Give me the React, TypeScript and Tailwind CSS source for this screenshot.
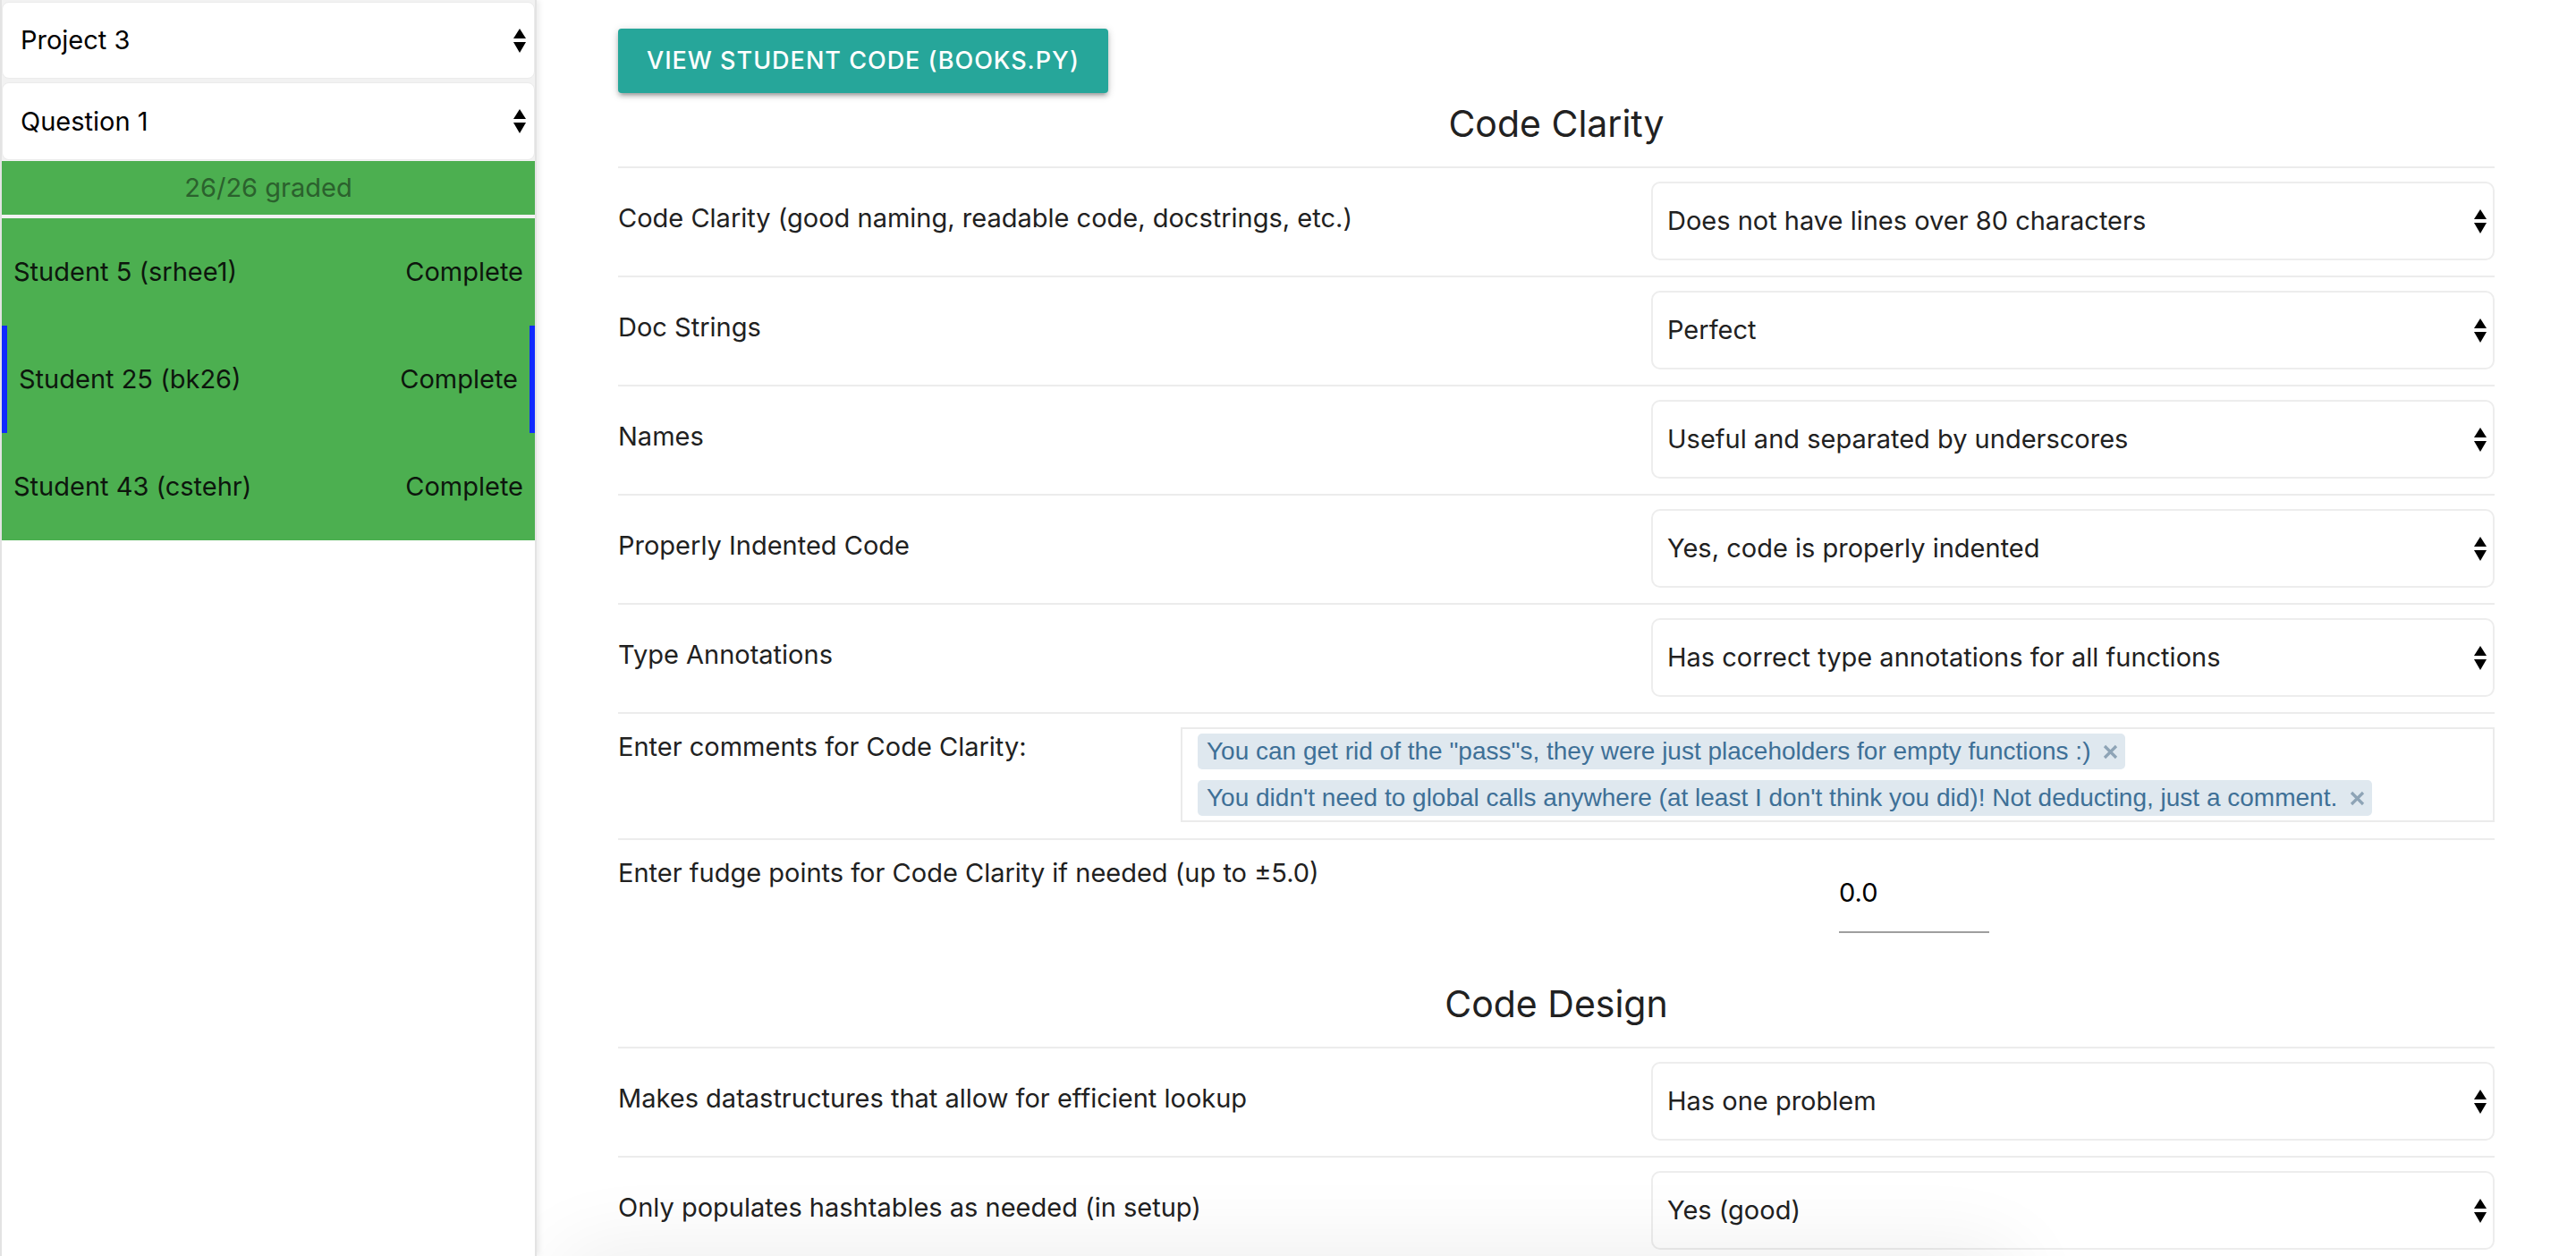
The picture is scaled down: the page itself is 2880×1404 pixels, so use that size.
import React from "react";

const Arrows = () => (
  <svg width="14" height="27" viewBox="0 0 14 27" className="shrink-0">
    <path d="M7 0 L14 11 L0 11 Z" fill="#000" />
    <path d="M0 15 L14 15 L7 27 Z" fill="#000" />
  </svg>
);

const SideSelect = ({ label, h }: { label: string; h: string }) => (
  <div className={`${h} flex items-center justify-between rounded-[8px] border border-[#ebebeb] bg-white pl-[20px] pr-[9px]`}>
    <span className="text-[29px] text-black">{label}</span>
    <Arrows />
  </div>
);

const students = [
  { name: "Student 5 (srhee1)", sel: false },
  { name: "Student 25 (bk26)", sel: true },
  { name: "Student 43 (cstehr)", sel: false },
];

const Select = ({ value }: { value: string }) => (
  <div className="flex h-[88px] items-center justify-between rounded-[10px] border-2 border-[#ededed] bg-white pl-[16px] pr-[7px]">
    <span className="text-[29px] text-[#212121]">{value}</span>
    <Arrows />
  </div>
);

const Row = ({ label, value }: { label: string; value: string }) => (
  <div className="flex border-t-2 border-[#ececec]">
    <div className="w-[1155px] shrink-0 pt-[33px] text-[29px] leading-[45px] text-[#212121]">{label}</div>
    <div className="flex-1 pt-[15px] pb-[17px]">
      <Select value={value} />
    </div>
  </div>
);

const Chip = ({ text }: { text: string }) => (
  <div className="flex h-[40px] items-center gap-[14px] self-start rounded-[5px] bg-[#dfe8ef] pl-[10px] pr-[8px] font-['Liberation_Sans',Arial,sans-serif] text-[28px] text-[#3e7097]">
    <span>{text}</span>
    <svg width="17" height="17" viewBox="0 0 17 17">
      <path d="M2 2 L15 15 M15 2 L2 15" stroke="#8ea4b6" strokeWidth="3.2" strokeLinecap="butt" />
    </svg>
  </div>
);

export default function App() {
  return (
    <div className="flex h-[1404px] w-[2880px] overflow-hidden bg-white font-['Inter',sans-serif]">
      {/* Sidebar */}
      <aside className="relative z-10 flex w-[600px] shrink-0 flex-col border-l-2 border-r-2 border-[#e3e3e3] bg-white shadow-[3px_0_6px_rgba(0,0,0,0.08)]">
        <div className="flex flex-col bg-[#f2f2f2] pt-[2px]">
          <SideSelect label="Project 3" h="h-[86px]" />
          <div className="h-[4px]" />
          <SideSelect label="Question 1" h="h-[87px]" />
          <div className="h-[1px]" />
          <div className="flex h-[60px] items-center justify-center bg-[#4caf50] text-[29px] text-[#2b612d]">
            26/26 graded
          </div>
          <div className="h-[4px]" />
        </div>
        <div className="flex flex-col bg-[#4caf50]">
          {students.map((s) => (
            <div
              key={s.name}
              className={
                s.sel
                  ? "flex h-[120px] items-center justify-between border-x-[6px] border-[#1029ff] px-[13px] text-[29px] text-[#0d160d]"
                  : "flex h-[120px] items-center justify-between px-[13px] text-[29px] text-[#0d160d]"
              }
            >
              <span>{s.name}</span>
              <span>Complete</span>
            </div>
          ))}
        </div>
      </aside>

      {/* Main */}
      <main className="relative flex-1 px-[91px] pt-[32px]">
        <button className="h-[72px] rounded-[4px] bg-[#26a69a] px-[32px] text-[27px] font-medium uppercase tracking-[1px] text-white shadow-[0_4px_4px_0_rgba(0,0,0,0.14),0_6px_2px_-4px_rgba(0,0,0,0.12),0_2px_10px_0_rgba(0,0,0,0.2)]">
          View student code (books.py)
        </button>

        <h2 className="mt-[7px] mb-[21px] h-[54px] text-center text-[41px] font-normal leading-[54px] text-[#212121]">
          Code Clarity
        </h2>

        <Row label="Code Clarity (good naming, readable code, docstrings, etc.)" value="Does not have lines over 80 characters" />
        <Row label="Doc Strings" value="Perfect" />
        <Row label="Names" value="Useful and separated by underscores" />
        <Row label="Properly Indented Code" value="Yes, code is properly indented" />
        <Row label="Type Annotations" value="Has correct type annotations for all functions" />

        <div className="flex border-t-2 border-[#ececec]">
          <div className="w-[629px] shrink-0 pt-[14px] text-[29px] leading-[45px] text-[#212121]">
            Enter comments for Code Clarity:
          </div>
          <div className="flex-1 pt-[15px] pb-[18px]">
            <div className="flex flex-col gap-[12px] border-2 border-[#ebebeb] py-[5px] pl-[17px]">
              <Chip text={'You can get rid of the "pass"s, they were just placeholders for empty functions :)'} />
              <Chip text={"You didn't need to global calls anywhere (at least I don't think you did)! Not deducting, just a comment."} />
            </div>
          </div>
        </div>

        <div className="flex border-t-2 border-[#ececec] pb-[28px]">
          <div className="w-[1365px] shrink-0 pt-[14px] text-[29px] leading-[45px] text-[#212121]">
            Enter fudge points for Code Clarity if needed (up to ±5.0)
          </div>
          <div className="w-[168px] pt-[14px]">
            <div className="flex h-[90px] items-center border-b-2 border-[#9e9e9e] pt-[2px] text-[29px] text-black">0.0</div>
          </div>
        </div>

        <h2 className="mt-[24px] mb-[21px] h-[54px] text-center text-[41px] font-normal leading-[54px] text-[#212121]">
          Code Design
        </h2>

        <Row label="Makes datastructures that allow for efficient lookup" value="Has one problem" />
        <Row label="Only populates hashtables as needed (in setup)" value="Yes (good)" />

        <div className="pointer-events-none absolute bottom-[-70px] left-[40px] h-[60px] w-[1600px] rounded-[40px] shadow-[0_0_90px_20px_rgba(0,0,0,0.07)]" />
      </main>
    </div>
  );
}
